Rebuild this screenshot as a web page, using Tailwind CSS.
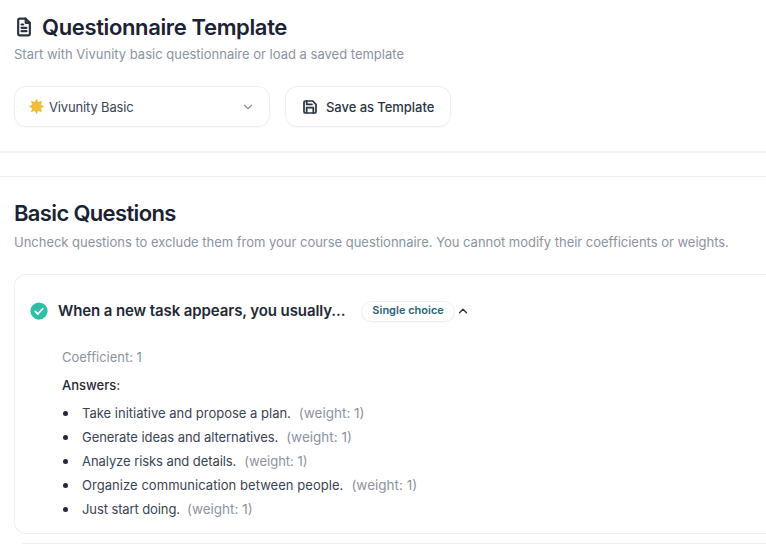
<!DOCTYPE html>
<html lang="en">
<head>
<meta charset="utf-8">
<script src="https://cdn.jsdelivr.net/npm/@tailwindcss/browser@4"></script>
</head>
<body class="w-[766px] h-[544px] overflow-hidden bg-white font-['Inter',sans-serif] text-[#1a2233]">
<div class="pl-[14px] pt-[14px]">
  <div class="flex items-center gap-[8px] h-[26px]">
    <svg class="w-[20px] h-[20px] text-[#2b3444]" viewBox="0 0 24 24" fill="none" stroke="currentColor" stroke-width="2.6" stroke-linecap="round" stroke-linejoin="round"><path d="M14 2H7a2 2 0 0 0-2 2v16a2 2 0 0 0 2 2h10a2 2 0 0 0 2-2V7z"/><path d="M14 2v5h5"/><path d="M9 9h2M9 13h6M9 17h6"/></svg>
    <h1 class="text-[22px] font-semibold leading-[26px] tracking-[-0.36px]">Questionnaire Template</h1>
  </div>
  <p class="text-[13px] leading-[18px] mt-[5px] text-[#8b93a1]">Start with Vivunity basic questionnaire or load a saved template</p>
  <div class="flex gap-[15px] mt-[23px]">
    <div class="w-[256px] h-[41px] rounded-[12px] border border-[#eceef0] shadow-[0_1px_2px_rgba(0,0,0,0.03)] flex items-center pl-[13px] pr-[14px] text-[13px] text-[#3a4454]">
      <svg class="w-[17px] h-[17px] mr-[4px]" viewBox="0 0 24 24" fill="#f0bd3a"><circle cx="12" cy="12" r="7"/><path d="M12 1l2.5 5h-5zM12 23l2.5-5h-5zM1 12l5-2.5v5zM23 12l-5-2.5v5zM4 4l6 2-4 4zM20 4l-6 2 4 4zM4 20l6-2-4-4zM20 20l-6-2 4-4z"/></svg>
      <span class="tracking-[-0.15px] translate-y-px">Vivunity Basic</span>
      <svg class="w-[14px] h-[14px] ml-auto text-[#8b93a1]" viewBox="0 0 24 24" fill="none" stroke="currentColor" stroke-width="2" stroke-linecap="round" stroke-linejoin="round"><path d="m6 9 6 6 6-6"/></svg>
    </div>
    <div class="w-[166px] h-[41px] rounded-[12px] border border-[#eceef0] shadow-[0_1px_2px_rgba(0,0,0,0.03)] flex items-center pl-[16px] gap-[8px] text-[13px] font-medium text-[#2b3444]">
      <svg class="w-[16px] h-[16px]" viewBox="0 0 24 24" fill="none" stroke="currentColor" stroke-width="2.6" stroke-linecap="round" stroke-linejoin="round"><path d="M19 21H5a2 2 0 0 1-2-2V5a2 2 0 0 1 2-2h11l5 5v11a2 2 0 0 1-2 2z"/><path d="M17 21v-8H7v8M7 3v5h8"/></svg>
      <span class="tracking-[-0.05px] translate-y-px">Save as Template</span>
    </div>
  </div>
</div>
<div class="mt-[24px] h-[2px] bg-[#f1f2f4]"></div>
<div class="mt-[23px] h-px bg-[#eeeff1]"></div>
<div class="pl-[14px]">
  <h2 class="text-[22px] font-semibold leading-[28px] mt-[22px] tracking-[-0.65px]">Basic Questions</h2>
  <p class="text-[13px] leading-[18px] mt-[6px] text-[#8b93a1] whitespace-nowrap tracking-[-0.02px]">Uncheck questions to exclude them from your course questionnaire. You cannot modify their coefficients or weights.</p>
  <div class="mt-[23px] h-[260px] rounded-l-[12px] border border-r-0 border-[#eceef0] pl-[15px] pt-[22px]">
    <div class="flex items-center h-[28px]">
      <svg class="w-[18px] h-[18px] mr-[10px]" viewBox="0 0 24 24"><circle cx="12" cy="12" r="11.5" fill="#2dbfa8"/><path d="m7 12.5 3.5 3.5L17 9" fill="none" stroke="#fff" stroke-width="2.4" stroke-linecap="round" stroke-linejoin="round"/></svg>
      <span class="text-[15px] font-semibold text-[#1f2937] tracking-[-0.1px]">When a new task appears, you usually...</span>
      <span class="ml-[16px] h-[21px] px-[10px] rounded-full border border-[#eceef0] shadow-[0_1px_2px_rgba(0,0,0,0.03)] flex items-center text-[11px] font-semibold text-[#2a6478]"><span class="-translate-y-px">Single choice</span></span>
      <svg class="w-[14px] h-[14px] ml-[1px] text-[#2b3444]" viewBox="0 0 24 24" fill="none" stroke="currentColor" stroke-width="2.4" stroke-linecap="round" stroke-linejoin="round"><path d="m6 15 6-6 6 6"/></svg>
    </div>
    <div class="pl-[32px]">
      <p class="text-[13px] leading-[18px] mt-[23px] text-[#8b93a1]">Coefficient: 1</p>
      <p class="text-[13px] leading-[18px] mt-[10px] font-medium text-[#1f2937]">Answers:</p>
      <ul class="mt-[7px] text-[13px] leading-[24px] text-[#3a4454]">
        <li class="flex items-center"><span class="ml-[1px] mr-[14px] w-[5px] h-[5px] rounded-full bg-[#1f2937]"></span>Take initiative and propose a plan.<span class="ml-[8px] text-[13.5px] text-[#8b93a1]">(weight: 1)</span></li>
        <li class="flex items-center"><span class="ml-[1px] mr-[14px] w-[5px] h-[5px] rounded-full bg-[#1f2937]"></span><span class="tracking-[-0.07px]">Generate ideas and alternatives.</span><span class="ml-[8px] text-[13.5px] text-[#8b93a1]">(weight: 1)</span></li>
        <li class="flex items-center"><span class="ml-[1px] mr-[14px] w-[5px] h-[5px] rounded-full bg-[#1f2937]"></span><span class="tracking-[-0.07px]">Analyze risks and details.</span><span class="ml-[8px] text-[13px] text-[#8b93a1]">(weight: 1)</span></li>
        <li class="flex items-center"><span class="ml-[1px] mr-[14px] w-[5px] h-[5px] rounded-full bg-[#1f2937]"></span><span class="tracking-[0.05px]">Organize communication between people.</span><span class="ml-[8px] text-[13.5px] text-[#8b93a1]">(weight: 1)</span></li>
        <li class="flex items-center"><span class="ml-[1px] mr-[14px] w-[5px] h-[5px] rounded-full bg-[#1f2937]"></span><span class="tracking-[-0.1px]">Just start doing.</span><span class="ml-[7px] text-[13.5px] text-[#8b93a1]">(weight: 1)</span></li>
      </ul>
    </div>
  </div>
  <div class="mt-[9px] ml-[8px] h-px bg-[#eeeff1]"></div>
</div>
</body>
</html>
